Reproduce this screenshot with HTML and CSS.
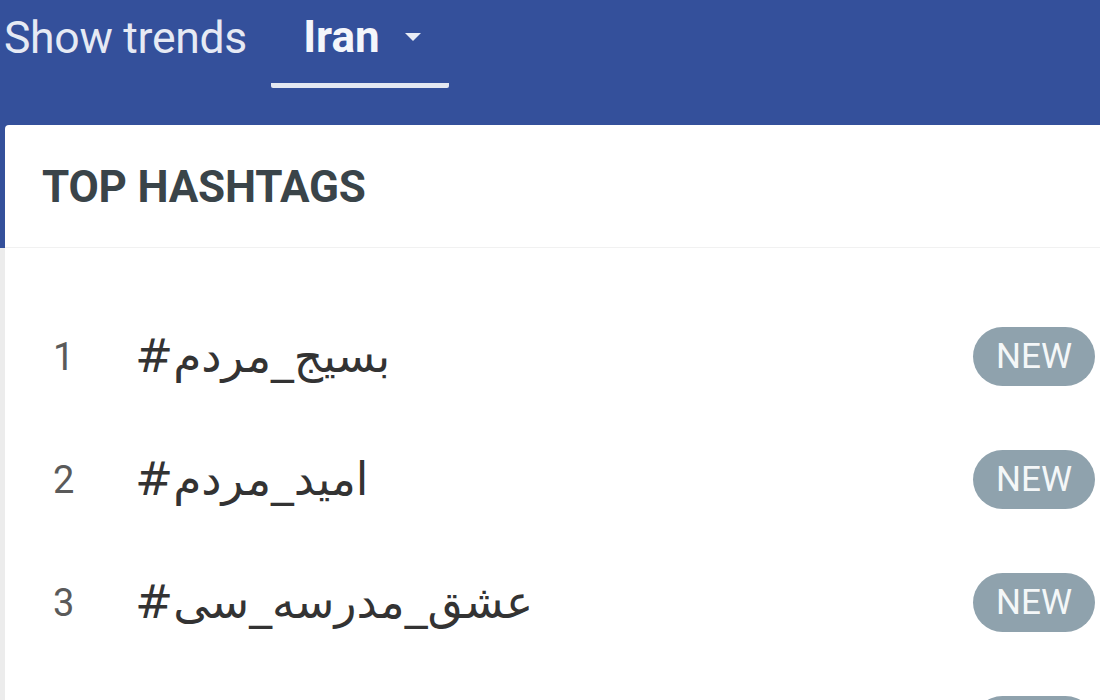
FILE: index.html
```html
<!DOCTYPE html>
<html lang="en">
<head>
<meta charset="utf-8">
<title>Trends</title>
<link rel="stylesheet" href="styles.css">
</head>
<body>
<header class="topbar">
  <span class="label">Show trends</span>
  <div class="tab">
    <span class="tab-text">Iran</span>
    <svg class="caret" width="16" height="8" viewBox="0 0 16 8"><path d="M0 0 H16 L8 8 Z" fill="#e8ecf5"/></svg>
  </div>
</header>
<main class="page">
  <section class="card">
    <h2 class="card-title">TOP HASHTAGS</h2>
    <ol class="list">
      <li class="row"><span class="num">1</span><span class="tag">#بسیج_مردم</span><span class="badge">NEW</span></li>
      <li class="row"><span class="num">2</span><span class="tag">#امید_مردم</span><span class="badge">NEW</span></li>
      <li class="row"><span class="num">3</span><span class="tag">#عشق_مدرسه_سی</span><span class="badge">NEW</span></li>
      <li class="row"><span class="num">4</span><span class="tag">#</span><span class="badge">NEW</span></li>
    </ol>
  </section>
</main>
</body>
</html>
```

FILE: styles.css
```css
html, body {
  margin: 0;
  padding: 0;
  height: 100%;
  overflow: hidden;
}
body {
  font-family: Roboto, "Liberation Sans", sans-serif;
  background: #ececec;
}
.topbar {
  background: #34509b;
  height: 125px;
  display: flex;
  align-items: flex-start;
  padding-left: 4px;
  box-sizing: border-box;
}
.label {
  color: #e6eaf4;
  font-size: 44.5px;
  line-height: 1;
  margin-top: 16px;
  letter-spacing: -0.3px;
}
.tab {
  margin-left: 24px;
  width: 178px;
  height: 88px;
  display: flex;
  align-items: flex-start;
  justify-content: center;
  gap: 25px;
  border-bottom: 5px solid #e4e8f2;
  box-sizing: border-box;
  padding-top: 15px;
  padding-left: 4px;
  border-radius: 0 0 2px 2px;
}
.tab-text {
  color: #f4f6fb;
  font-weight: 700;
  font-size: 44px;
  line-height: 1;
}
.caret {
  margin-top: 18px;
}
.page {
  background: linear-gradient(#34509b 0, #34509b 123px, #ececec 123px);
  min-height: 600px;
  padding-left: 5px;
}
.card {
  background: #fff;
  border-top-left-radius: 4px;
  min-height: 600px;
}
.card-title {
  margin: 0;
  height: 123px;
  box-sizing: border-box;
  padding: 40px 0 0 37px;
  font-size: 44px;
  font-weight: 700;
  color: #3a4449;
  line-height: 1;
  border-bottom: 1px solid #f1f1f1;
  letter-spacing: -0.2px;
}
.list {
  list-style: none;
  margin: 0;
  padding: 47px 0 0 0;
}
.row {
  height: 123px;
  display: flex;
  align-items: center;
}
.num {
  width: 130px;
  padding-left: 48px;
  box-sizing: border-box;
  color: #5a5a5a;
  font-size: 38px;
}
.tag {
  font-family: "DejaVu Sans", sans-serif;
  font-size: 45.5px;
  line-height: 1;
  color: #333;
  flex: 1;
}
.badge {
  background: #8fa2ad;
  color: #f4f7f8;
  font-size: 35px;
  width: 122px;
  height: 59px;
  border-radius: 30px;
  display: flex;
  align-items: center;
  justify-content: center;
  margin-right: 5px;
}
```
